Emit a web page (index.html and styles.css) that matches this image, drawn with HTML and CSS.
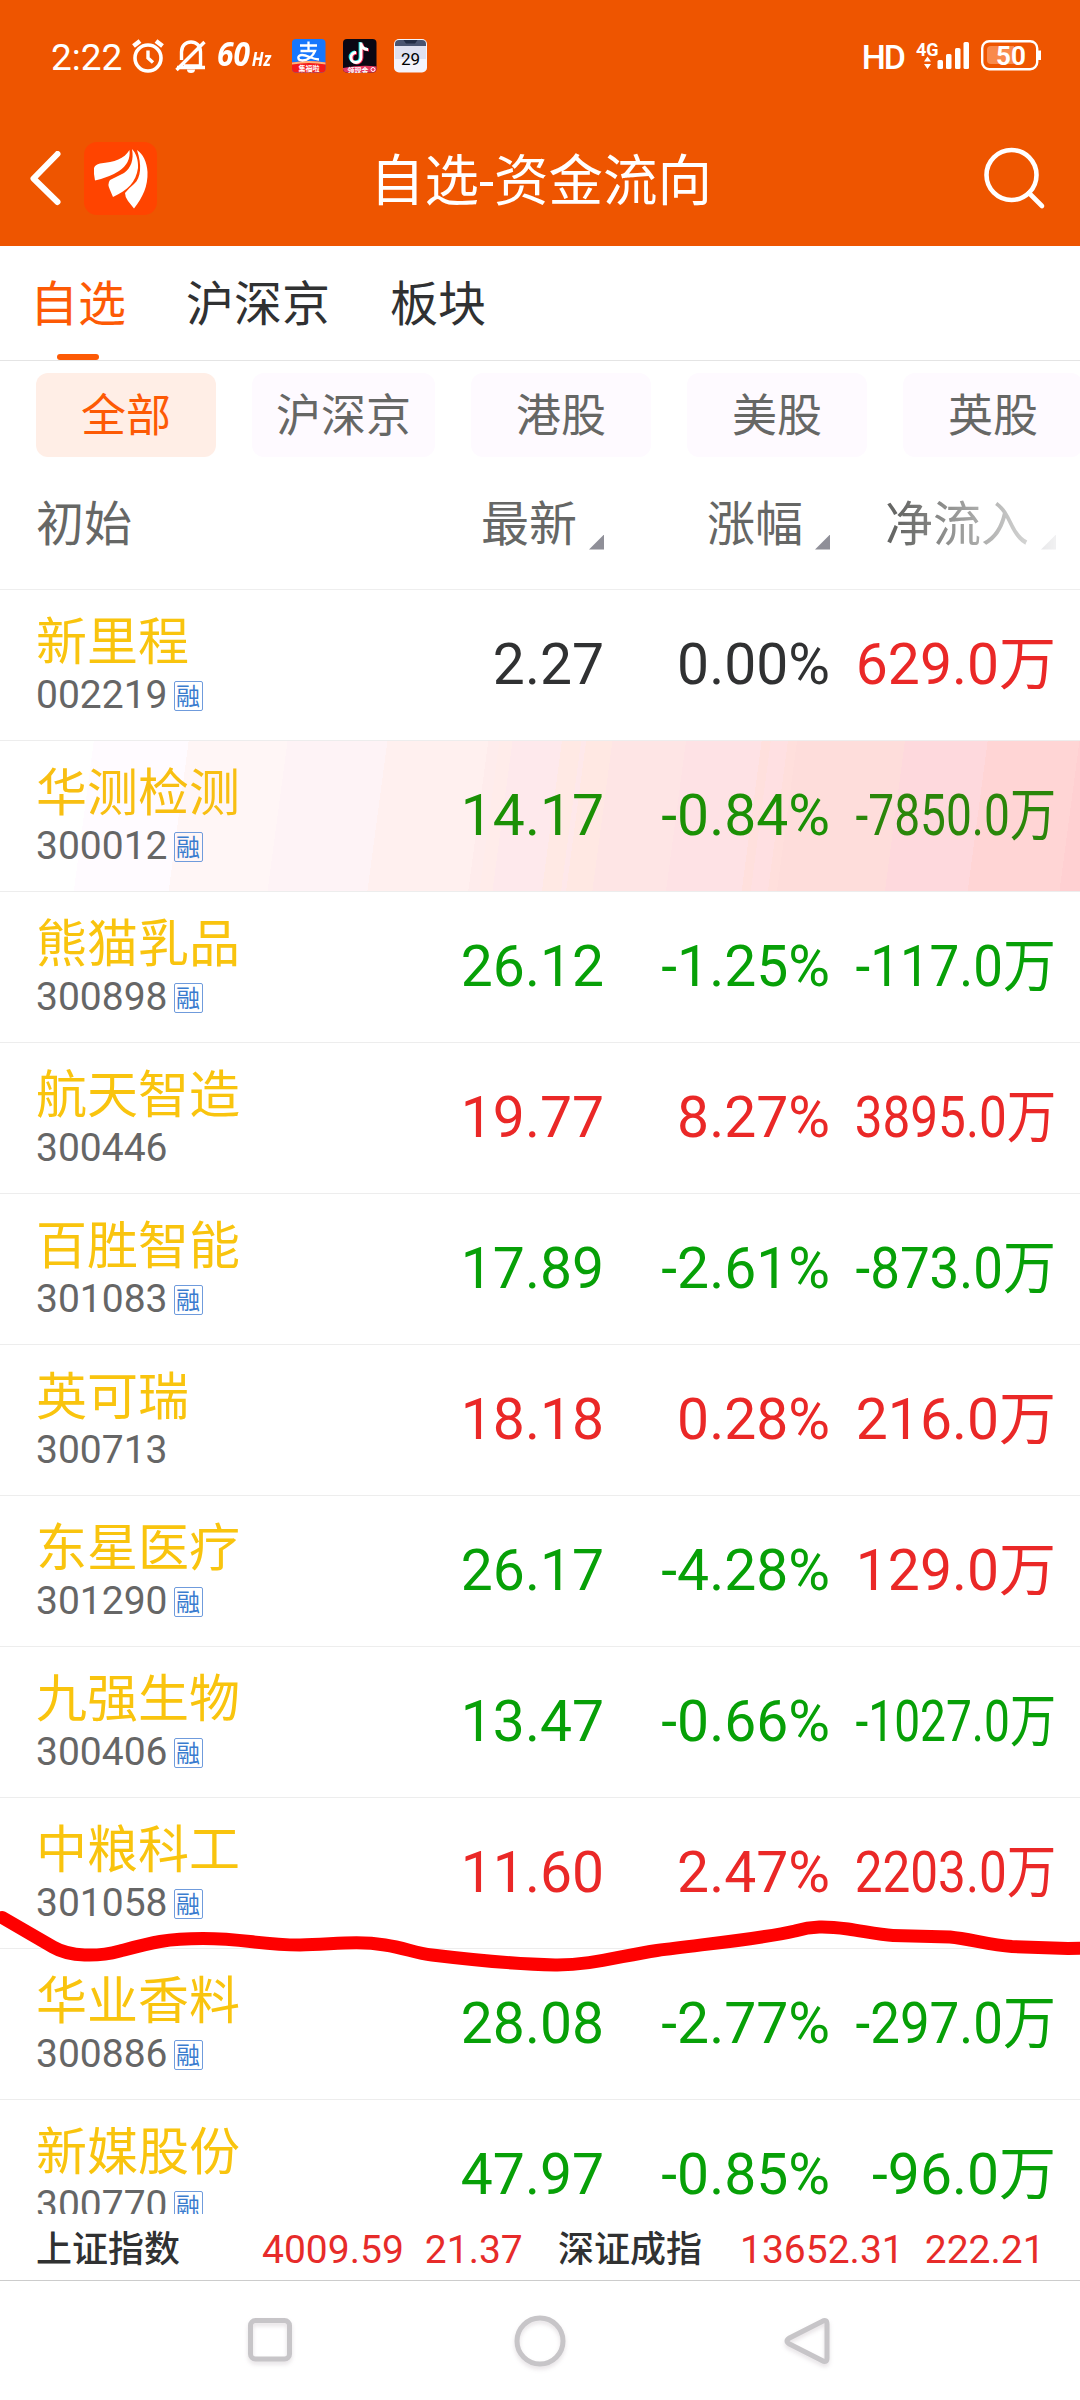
FILE: index.html
```html
<!DOCTYPE html>
<html lang="zh-CN">
<head>
<meta charset="utf-8">
<title>自选-资金流向</title>
<link rel="stylesheet" href="styles.css">
</head>
<body>
<div class="screen">
  <header class="top">
    <div class="status">
      <span class="clock">2:22</span>
      <svg class="i-alarm" width="32" height="34" viewBox="0 0 32 34" fill="none" stroke="#fff" stroke-width="3.6"><circle cx="16" cy="19" r="13"/><path d="M1.5 7 8 2M30.500 7 24 2" stroke-width="4.500"/><path d="M16 11.500V19l5 4.500" stroke-width="3.400"/></svg>
      <svg class="i-bell" width="32" height="34" viewBox="0 0 32 34" fill="none" stroke="#fff" stroke-width="3.400"><path d="M6.500 21V13C6.500 6.500 11 3 16 3S25.500 6.500 25.500 13V27H9M2 28.500H30M1.500 31 29.500 3"/><path d="M12 30.500a4 3.500 0 0 0 8 0z" fill="#fff" stroke="none"/></svg>
      <span class="rate">60<small>Hz</small></span>
      <svg class="i-app" width="34" height="34" viewBox="0 0 34 34"><defs><clipPath id="r"><rect width="33.500" height="33.500" rx="4"/></clipPath></defs><g clip-path="url(#r)"><rect width="34" height="34" fill="#1777fd"/><path d="M0 23.500Q17 20.500 34 23.500V34H0z" fill="#f51a1a"/><path d="M0 23.500Q17 20.500 34 23.500V25.500Q17 22.500 0 25.500z" fill="#ffb37a"/><path d="M8 6.500H25M16.500 2.500V12M8.500 12H23C21 17 16 21.500 10.500 21.500 5 21.500 5 16 10 16 16 16 19 20 27 20.500" fill="none" stroke="#fff" stroke-width="2.300"/></g><text x="17" y="32" class="tiny">集福啦</text></svg>
      <svg class="i-app" width="34" height="34" viewBox="0 0 34 34"><g clip-path="url(#r)"><rect width="34" height="34" fill="#0b0713"/><path d="M0 29Q18 25.500 34 27.500V34H0z" fill="#e53a62"/><g fill="none" stroke-width="2.800"><path d="M17 3V18a5 5 0 1 1-5-5M17 4q1 6 7 6" stroke="#25e8e4"/><path d="M19 4.500V19a5 5 0 1 1-5-5M19 5q1 6 7 6" stroke="#fb2c58"/><path d="M18 3.500V18.500a5 5 0 1 1-5-5M18 4.500q1 6 7 6" stroke="#fff"/></g></g><text x="15" y="33.500" class="tiny">领现金</text><circle cx="30" cy="30.500" r="2" fill="none" stroke="#fff"/></svg>
      <svg class="i-app" width="34" height="34" viewBox="0 0 34 34"><rect width="33" height="33.500" rx="5" fill="#f4f4fc"/><path d="M1 20V7H32V20z" fill="#dfe0ef"/><path d="M1 7V5a4 4 0 0 1 4-4H28a4 4 0 0 1 4 4V7z" fill="#4a5470"/><path d="M9.500 1H23.500L21 4.500H12z" fill="#222c45"/><text x="16.500" y="25.500" class="cal">29</text></svg>
      <span class="hd">HD</span>
      <svg class="i-signal" width="55" height="30" viewBox="0 0 55 30" fill="#fff"><text x="0" y="14.500" class="g4">4G</text><path d="M8 20.500 11.500 15.500 15 20.500zM8 23 11.500 28 15 23z"/><rect x="21.500" y="19" width="5.500" height="9" rx="1.500"/><rect x="30" y="13" width="5.500" height="15" rx="1.500"/><rect x="39" y="7" width="5.500" height="21" rx="1.500"/><rect x="47.500" y="1" width="5.500" height="27" rx="1.500"/></svg>
      <svg class="i-battery" width="61" height="31" viewBox="0 0 61 31"><rect x="1.200" y="1.200" width="55" height="28" rx="7" fill="none" stroke="#fff" stroke-width="2.400"/><path d="M57 10.500h3v9.500h-3z" fill="#fff"/><path d="M10 6H33V24H10a4 4 0 0 1-4-4V10a4 4 0 0 1 4-4z" fill="#f98a4c"/><text x="30" y="24.500" class="pct">50</text></svg>
    </div>
    <div class="bar">
      <svg class="i-back" width="34" height="56" viewBox="0 0 34 56" fill="none" stroke="#fff" stroke-width="6" stroke-linecap="round" stroke-linejoin="round"><path d="M29.500 3 5.500 27.500 29.500 51"/></svg>
      <svg class="i-logo" width="73" height="74" viewBox="84 142 73 74"><rect x="84" y="142" width="73" height="73" rx="13" fill="#ff4400"/><g fill="#fff"><path d="M94 168Q95 164.500 100 163.500C115 162 124 159 129.500 150Q131 163 119 171 110 177 95 180.500 93.500 174 94 168z"/><path d="M132 149C134 160 131 168 124 173L110 180Q107 184 110 190L113 197C128 190 136 182 138 168 138.500 160 136 153 132 149z"/><path d="M137 150C142 165 141 178 134 184Q129 188 125 193 125 197 128 201L134 208.500C143 197 148 186 147.500 172 147 162 143 154 137 150z"/></g></svg>
      <h1>自选-资金流向</h1>
      <svg class="i-search" width="64" height="64" viewBox="0 0 64 64" fill="none" stroke="#fff" stroke-width="4.600" stroke-linecap="round"><circle cx="29.500" cy="28" r="25"/><path d="M47 46 60 59"/></svg>
    </div>
  </header>

  <nav class="tabs"><span class="tab on">自选</span><span class="tab">沪深京</span><span class="tab">板块</span></nav>

  <div class="chips"><span class="chip on">全部</span><span class="chip wide">沪深京</span><span class="chip">港股</span><span class="chip">美股</span><span class="chip">英股</span></div>

  <div class="cols grid"><span>初始</span><span class="sort">最新</span><span class="sort">涨幅</span><span class="sort fade">净流入</span></div>

  <main class="list">
    <div class="row grid"><div><div class="name">新里程</div><div class="code">002219<i>融</i></div></div><b>2.27</b><b>0.00%</b><b class="up">629.0万</b></div>
    <div class="row grid hot"><div><div class="name">华测检测</div><div class="code">300012<i>融</i></div></div><b class="down">14.17</b><b class="down">-0.84%</b><b class="down x80">-7850.0万</b></div>
    <div class="row grid"><div><div class="name">熊猫乳品</div><div class="code">300898<i>融</i></div></div><b class="down">26.12</b><b class="down">-1.25%</b><b class="down x92">-117.0万</b></div>
    <div class="row grid"><div><div class="name">航天智造</div><div class="code">300446</div></div><b class="up">19.77</b><b class="up">8.27%</b><b class="up x86">3895.0万</b></div>
    <div class="row grid"><div><div class="name">百胜智能</div><div class="code">301083<i>融</i></div></div><b class="down">17.89</b><b class="down">-2.61%</b><b class="down x92">-873.0万</b></div>
    <div class="row grid"><div><div class="name">英可瑞</div><div class="code">300713</div></div><b class="up">18.18</b><b class="up">0.28%</b><b class="up">216.0万</b></div>
    <div class="row grid"><div><div class="name">东星医疗</div><div class="code">301290<i>融</i></div></div><b class="down">26.17</b><b class="down">-4.28%</b><b class="up">129.0万</b></div>
    <div class="row grid"><div><div class="name">九强生物</div><div class="code">300406<i>融</i></div></div><b class="down">13.47</b><b class="down">-0.66%</b><b class="down x80">-1027.0万</b></div>
    <div class="row grid"><div><div class="name">中粮科工</div><div class="code">301058<i>融</i></div></div><b class="up">11.60</b><b class="up">2.47%</b><b class="up x86">2203.0万</b></div>
    <div class="row grid"><div><div class="name">华业香料</div><div class="code">300886<i>融</i></div></div><b class="down">28.08</b><b class="down">-2.77%</b><b class="down x92">-297.0万</b></div>
    <div class="row grid"><div><div class="name">新媒股份</div><div class="code">300770<i>融</i></div></div><b class="down">47.97</b><b class="down">-0.85%</b><b class="down">-96.0万</b></div>
  </main>

  <div class="indices">
    <div class="index first"><strong>上证指数</strong><span>4009.59</span><span>21.37</span></div>
    <div class="index"><strong>深证成指</strong><span>13652.31</span><span>222.21</span></div>
  </div>

  <div class="keys">
    <svg width="52" height="56" viewBox="0 0 52 56"><rect x="6.500" y="6.500" width="39" height="38.500" rx="5"/></svg>
    <svg width="60" height="60" viewBox="0 0 60 60"><circle cx="30" cy="28" r="23"/></svg>
    <svg width="56" height="56" viewBox="0 0 56 56"><path d="M44 8.500Q49 5.500 49 11V45Q49 50.500 44 47.500L11.500 31Q6.500 28 11.500 25z"/></svg>
  </div>

  <svg class="stroke" width="1080" height="80" viewBox="0 1900 1080 80"><path d="M2 1917.500 53 1947C70 1957 98 1957 120 1951 150 1943 165 1938.500 203 1938.500 245 1938.500 260 1945 300 1945 330 1945 355 1940 385 1945 405 1948 415 1953 432 1955 465 1959 510 1964 555 1965 590 1965.500 620 1956 657 1950.500 705 1944 760 1939 795 1931 812 1926 825 1926 848 1929 865 1931.500 880 1935 893 1935.500L950 1937C970 1939 990 1945 1012 1946.500L1068 1948.500 1086 1948"/></svg>
</div>
</body>
</html>
```

FILE: styles.css
```css
* { box-sizing: border-box; }
body {
  margin: 0;
  background: #fff;
  font-family: Roboto, "Noto Sans CJK SC", sans-serif;
  color: #303132;
}
svg { display: block; flex: none; }
.screen {
  position: relative;
  width: 1080px;
  height: 2400px;
  overflow: hidden;
  display: flex;
  flex-direction: column;
}

/* orange top area */
.top { height: 246px; flex: none; background: #ee5500; color: #fff; }
.status { height: 111px; padding: 0 38px 0 51px; display: flex; align-items: center; }
.clock { width: 81px; font-size: 37px; line-height: 40px; padding-top: 5px; }
.i-bell { margin-left: 11px; }
.rate {
  width: 75px;
  margin-left: 10px;
  font: italic 700 34px/40px "Open Sans", Roboto, sans-serif;
  white-space: nowrap;
  transform: scaleX(.88);
  transform-origin: 0 50%;
}
.rate small { font-size: 19px; margin-left: 2px; }
.i-app { margin-right: 17px; }
.tiny { font: 700 7px "Noto Sans CJK SC", sans-serif; fill: #fff; text-anchor: middle; }
.cal { font: 17px Roboto, sans-serif; fill: #000; text-anchor: middle; }
.hd { margin-left: auto; font-size: 34px; font-weight: 500; line-height: 40px; letter-spacing: -2px; padding-top: 3px; }
.i-signal { margin-left: 12px; overflow: visible; }
.g4 { font: 700 18px Roboto, sans-serif; }
.i-battery { margin-left: 10px; }
.pct { font: 700 26px Roboto, sans-serif; fill: #fff; text-anchor: middle; }

.bar { height: 135px; padding: 0 34px 0 28px; display: flex; align-items: center; }
.i-logo { margin-left: 22px; }
h1 { flex: 1; margin: 5px 75px 0 18px; text-align: center; font-size: 54.500px; font-weight: 400; line-height: 64px; }

/* tabs */
.tabs {
  height: 115px;
  flex: none;
  display: flex;
  padding-left: 30px;
  gap: 60px;
  border-bottom: 1px solid #e4e4e4;
  font-size: 48px;
  line-height: 118px;
}
.tab.on { color: #fd5a05; display: flex; flex-direction: column; align-items: center; }
.tab.on::after { content: ""; width: 42px; height: 6px; margin-top: -10px; border-radius: 3px; background: #fd5a05; }

/* market chips */
.chips { display: flex; flex: none; gap: 36px; padding: 12px 0 0 36px; height: 96px; }
.chip {
  flex: 0 0 180px;
  height: 84px;
  border-radius: 12px;
  background: #fefaff;
  color: #666765;
  font-size: 45px;
  line-height: 88px;
  text-align: center;
}
.chip.wide { flex-basis: 183px; }
.chip.on { background: #ffeee6; color: #fd5a05; }

/* shared columns */
.grid { display: grid; grid-template-columns: 260px 308px 226px 226px; padding-left: 36px; }
.cols { height: 133px; flex: none; border-bottom: 1px solid #eee; color: #666765; font-size: 48px; line-height: 136px; }
.sort { display: flex; justify-content: flex-end; align-items: center; gap: 12px; }
.sort::after { content: ""; width: 15px; height: 15px; margin-top: 34px; background: #8f8f98; clip-path: polygon(100% 0, 100% 100%, 0 100%); }
.fade { mask-image: linear-gradient(90deg, #000 30%, rgba(0, 0, 0, .12) 100%); }

.list { height: 1624px; flex: none; overflow: hidden; }
.row { height: 151px; border-bottom: 1px solid #ededed; align-items: center; }
.name { font-size: 51px; line-height: 60px; color: #f9c40e; }
.code { display: flex; align-items: center; gap: 6px; font-size: 39px; line-height: 44px; color: #666; }
.code i {
  width: 29px;
  height: 30px;
  margin-top: 1px;
  border: 1.500px solid #6f9bdc;
  border-radius: 2px;
  font: 24px/26px "Noto Sans CJK SC", sans-serif;
  color: #3a7ccf;
  text-align: center;
}
.row b { font-size: 57px; font-weight: 400; line-height: 66px; white-space: nowrap; justify-self: end; transform-origin: 100% 50%; }
.up { color: #ea2827; }
.down { color: #07a007; }
.x80 { transform: scaleX(.808); }
.x86 { transform: scaleX(.868); }
.x92 { transform: scaleX(.928); }
.hot {
  background: linear-gradient(97.600deg,
    #fff 93px, #fffbff 93px 187px, #fff6f6 187px 285px, #fef3f6 285px 384px,
    #fff0ef 384px 484px, #feecec 484px 495px, #ffecea 495px 508px, #fee9ec 508px 557px,
    #ffe9e4 557px 576px, #fee8ea 576px 581px, #ffe8e3 581px 607px, #fee5e5 607px 680px,
    #fee2e5 680px 755px, #ffe0dd 755px 764px, #ffe0e2 764px 781px, #ffdfdc 781px 790px,
    #fedddb 790px 897px, #fed9dd 897px 979px, #ffd5d5 979px 1070px, #ffd0d2 1070px);
}
.hot .name { color: #f8bf12; }
.hot .down { color: #1b9005; }
.hot .x80 { color: #2b860a; }

/* index footer */
.indices { height: 67px; flex: none; display: flex; padding-left: 36px; border-bottom: 1px solid #ccc; }
.index { display: flex; font-size: 39px; line-height: 72px; color: #e72b2a; }
.index.first { width: 522px; }
.index strong { width: 182px; font-size: 36px; line-height: 73px; font-weight: 500; color: #303132; }
.index.first strong { width: 226px; }
.index span + span { margin-left: 21px; }

/* system keys */
.keys { height: 119px; display: flex; align-items: flex-start; padding: 33px 0 0 244px; fill: none; stroke: #c7c5c8; stroke-width: 5; }
.keys svg { overflow: visible; filter: drop-shadow(0 3px 2px rgba(90, 60, 80, .15)); }
.keys svg + svg { margin: -1px 0 0 214px; }
.keys svg + svg + svg { margin: -1px 0 0 208px; }

/* freehand marker line over the list */
.stroke { position: absolute; left: 0; top: 1900px; fill: none; stroke: #fe0000; stroke-width: 13; stroke-linecap: round; stroke-linejoin: round; }
```
